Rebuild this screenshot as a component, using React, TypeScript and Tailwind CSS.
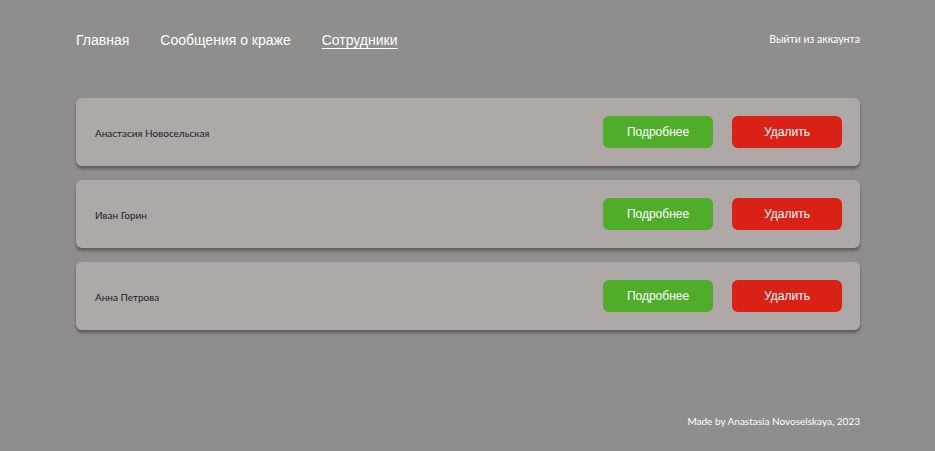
import React from 'react';

const employees = ['Анастасия Новосельская', 'Иван Горин', 'Анна Петрова'];

export default function App() {
  return (
    <div className="min-h-[451px] bg-[#8f8e8c] flex flex-col px-[75px] pl-[76px]">
      <header className="flex items-center justify-between h-[50px] mt-[15px]">
        <nav className="flex items-center gap-[31px] text-white text-[14px] font-['Liberation_Sans',Arial,sans-serif]">
          <a className="cursor-pointer">Главная</a>
          <a className="cursor-pointer">Сообщения о краже</a>
          <a className="cursor-pointer underline underline-offset-[3px]">Сотрудники</a>
        </nav>
        <button className="text-white text-[10.5px] font-['Lato',sans-serif]">Выйти из аккаунта</button>
      </header>

      <main className="flex flex-col gap-[14px] mt-[33px]">
        {employees.map((name) => (
          <div
            key={name}
            className="flex items-center justify-between h-[68px] bg-[#aea8a7] rounded-[6px] pl-[19px] pr-[18px] shadow-[0_3px_3px_rgba(60,58,56,0.55)]"
          >
            <span className="text-[10px] text-[#222] font-['Lato',sans-serif] pt-[2px]">{name}</span>
            <div className="flex gap-[19px]">
              <button className="w-[110px] h-[32px] rounded-[6px] bg-[#50ad2a] text-white text-[12px] font-['Liberation_Sans',Arial,sans-serif]">
                Подробнее
              </button>
              <button className="w-[110px] h-[32px] rounded-[6px] bg-[#d92116] text-white text-[12px] font-['Liberation_Sans',Arial,sans-serif]">
                Удалить
              </button>
            </div>
          </div>
        ))}
      </main>

      <footer className="flex justify-end mt-auto pb-[22px]">
        <span className="text-white text-[10px] font-['Lato',sans-serif]">Made by Anastasia Novoselskaya, 2023</span>
      </footer>
    </div>
  );
}
